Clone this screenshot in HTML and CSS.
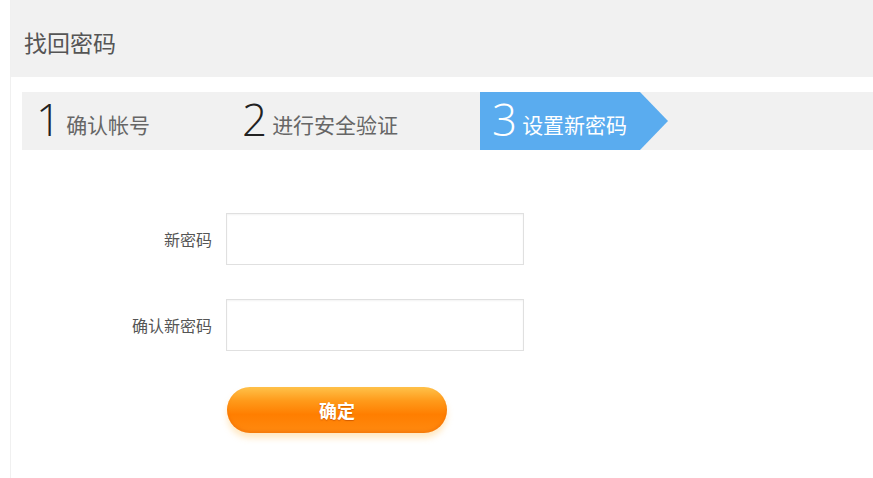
FILE: index.html
```html
<!DOCTYPE html>
<html lang="zh-CN">
<head>
  <meta charset="UTF-8">
  <title>找回密码</title>
  <link rel="stylesheet" href="styles.css">
</head>
<body>
  <div class="page">
    <div class="head">找回密码</div>

    <div class="steps">
      <div class="step step-1"><span class="num">1</span><span class="txt">确认帐号</span></div>
      <div class="step step-2"><span class="num">2</span><span class="txt">进行安全验证</span></div>
      <div class="step step-3 active"><span class="num">3</span><span class="txt">设置新密码</span></div>
    </div>

    <form class="form" onsubmit="return false">
      <label class="lbl" for="pwd">新密码</label>
      <input class="ipt" id="pwd" type="password">

      <label class="lbl" for="pwd2">确认新密码</label>
      <input class="ipt" id="pwd2" type="password">

      <span></span>
      <button class="btn" type="submit">确定</button>
    </form>
  </div>
</body>
</html>
```

FILE: styles.css
```css
body {
  margin: 0;
  background: #fff;
  font-family: "Noto Sans CJK SC", "Noto Sans", sans-serif;
  color: #555;
}
.page {
  margin-left: 10px;
  border-left: 1px solid #f0f0f0;
  height: 478px;
}
.head {
  height: 77px;
  box-sizing: border-box;
  padding: 26px 0 0 13px;
  background: #f1f1f1;
  font-size: 23px;
  line-height: 32px;
  color: #555;
}
.steps {
  display: flex;
  margin: 15px 0 0 11px;
  height: 58px;
  background: #f1f1f1;
}
.step {
  display: flex;
  align-items: center;
  box-sizing: border-box;
  height: 58px;
}
.step .num {
  font-family: "Open Sans", "Noto Sans", sans-serif;
  font-weight: 300;
  font-size: 44px;
  line-height: 1;
  color: #222;
  margin-top: -4px;
}
.step .txt {
  font-size: 21px;
  color: #666;
  margin-left: 5px;
  margin-top: 6px;
}
.step-1 {
  width: 206px;
  padding-left: 14px;
}
.step-2 {
  width: 252px;
  padding-left: 14px;
}
.step-3 {
  width: 188px;
  padding-left: 12px;
  background: #5aacef;
  clip-path: polygon(0 0, 160px 0, 188px 50%, 160px 100%, 0 100%);
}
.step-3 .num,
.step-3 .txt {
  color: #fff;
}
.form {
  display: grid;
  grid-template-columns: 201px 298px;
  column-gap: 14px;
  row-gap: 34px;
  align-items: center;
  margin-top: 63px;
}
.lbl {
  text-align: right;
  font-size: 16px;
  color: #555;
}
.ipt {
  height: 52px;
  box-sizing: border-box;
  border: 1px solid #e0e0e0;
  box-shadow: inset 0 1px 2px rgba(0, 0, 0, 0.05);
  padding: 0 10px;
  font-size: 15px;
  outline: none;
}
.btn {
  width: 220px;
  height: 46px;
  margin-top: 2px;
  margin-left: 1px;
  border: none;
  border-radius: 23px;
  background: linear-gradient(#ffc24a 0%, #ff9a1a 30%, #ff7e00 60%, #ff8a10 100%);
  box-shadow: 0 5px 6px rgba(255, 190, 80, 0.35), inset 0 -2px 3px rgba(230, 100, 0, 0.4);
  color: #fff;
  font-family: "Noto Sans CJK SC", sans-serif;
  font-size: 18px;
  font-weight: bold;
  text-shadow: 0 1px 1px rgba(180, 70, 0, 0.6);
  cursor: pointer;
}
```
